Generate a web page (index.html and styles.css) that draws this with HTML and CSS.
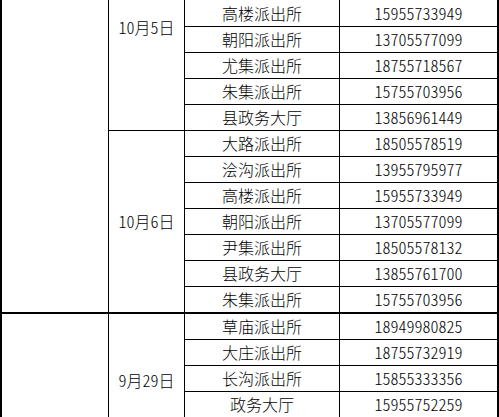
FILE: index.html
```html
<!DOCTYPE html>
<html lang="zh-CN">
<head>
<meta charset="utf-8">
<title>值班表</title>
<link rel="stylesheet" href="styles.css">
</head>
<body>
<table class="duty">
  <colgroup>
    <col class="w1"><col class="w2"><col class="w3"><col class="w4">
  </colgroup>
  <tbody>
    <tr class="first">
      <td class="area thick" rowspan="12"></td>
      <td class="date date-top" rowspan="5">10月5日</td>
      <td class="name">高楼派出所</td>
      <td class="phone">15955733949</td>
    </tr>
    <tr><td class="name">朝阳派出所</td><td class="phone">13705577099</td></tr>
    <tr><td class="name">尤集派出所</td><td class="phone">18755718567</td></tr>
    <tr><td class="name">朱集派出所</td><td class="phone">15755703956</td></tr>
    <tr><td class="name">县政务大厅</td><td class="phone">13856961449</td></tr>
    <tr>
      <td class="date thick" rowspan="7">10月6日</td>
      <td class="name">大路派出所</td><td class="phone">18505578519</td>
    </tr>
    <tr><td class="name">浍沟派出所</td><td class="phone">13955795977</td></tr>
    <tr><td class="name">高楼派出所</td><td class="phone">15955733949</td></tr>
    <tr><td class="name">朝阳派出所</td><td class="phone">13705577099</td></tr>
    <tr><td class="name">尹集派出所</td><td class="phone">18505578132</td></tr>
    <tr><td class="name">县政务大厅</td><td class="phone">13855761700</td></tr>
    <tr class="last-of-block"><td class="name thick">朱集派出所</td><td class="phone thick">15755703956</td></tr>
    <tr>
      <td class="area open" rowspan="4"></td>
      <td class="date open date-low" rowspan="4">9月29日</td>
      <td class="name">草庙派出所</td><td class="phone">18949980825</td>
    </tr>
    <tr><td class="name">大庄派出所</td><td class="phone">18755732919</td></tr>
    <tr><td class="name">长沟派出所</td><td class="phone">15855333356</td></tr>
    <tr><td class="name">政务大厅</td><td class="phone">15955752259</td></tr>
  </tbody>
</table>
</body>
</html>
```
FILE: styles.css
```css
html, body {
  margin: 0;
  padding: 0;
  background: #fff;
  overflow: hidden;
}

.duty {
  border-collapse: separate;
  border-spacing: 0;
  table-layout: fixed;
  width: 499px;
  font-family: "Noto Sans CJK SC", "Noto Sans", sans-serif;
  font-size: 16px;
  font-weight: 300;
  font-feature-settings: "hwid";
  color: #000;
}

.w1 { width: 109px; }
.w2 { width: 76px; }
.w3 { width: 155px; }
.w4 { width: 159px; }

.duty td {
  box-sizing: content-box;
  height: 25px;
  padding: 0;
  line-height: 25px;
  text-align: center;
  vertical-align: middle;
  white-space: nowrap;
  border-right: 1px solid #000;
  border-bottom: 1px solid #000;
}

.duty tr.first td.name,
.duty tr.first td.phone {
  height: 26px;
}

.duty td.area {
  border-left: 2px solid #000;
}

.duty td.phone {
  border-right-width: 2px;
}

.duty td.thick {
  border-bottom-width: 2px;
}

.duty tr.last-of-block td {
  height: 24px;
}

.duty td.open {
  border-bottom: 0;
}

.duty td.date-top {
  vertical-align: top;
  padding-top: 15px;
}

.duty td.date-low {
  vertical-align: top;
  padding-top: 54px;
}
```
